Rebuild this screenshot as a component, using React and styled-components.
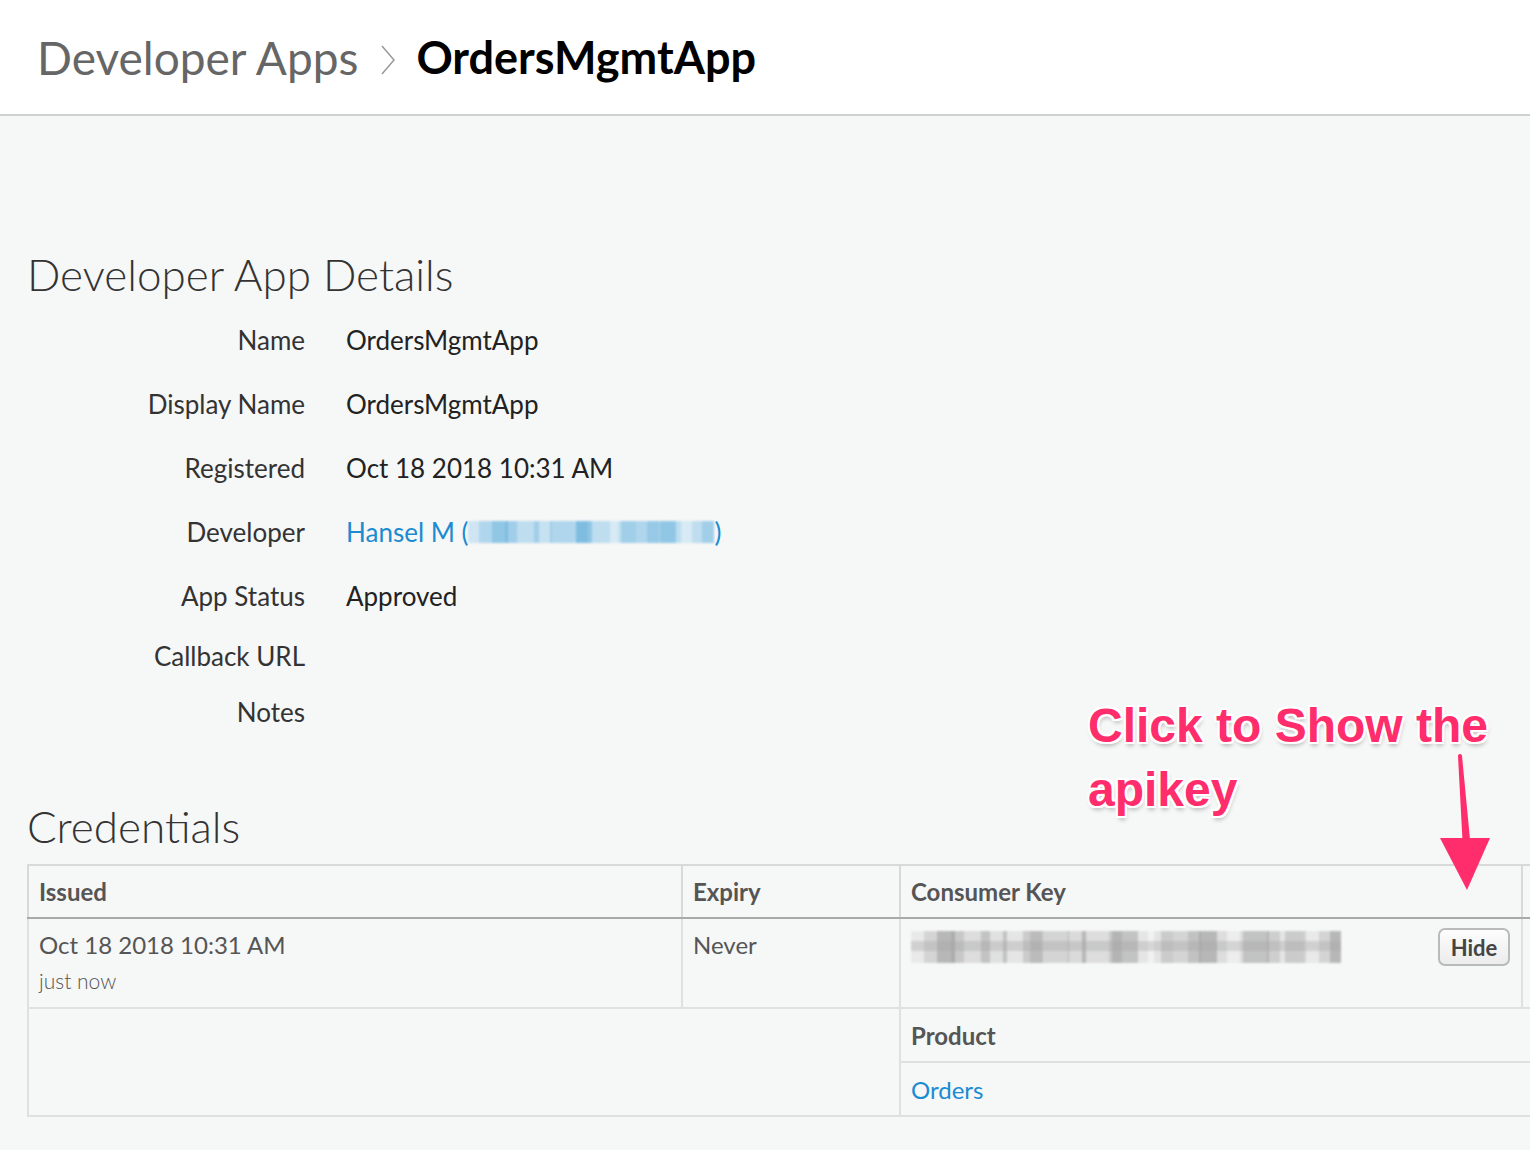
import React from 'react';
import styled, { createGlobalStyle } from 'styled-components';

const GlobalStyle = createGlobalStyle`
	html, body {
		margin: 0;
		padding: 0;
		background: #f6f7f7;
		font-family: Lato, 'Open Sans', sans-serif;
		overflow-x: hidden;
	}
`;

const Page = styled.div`
	position: relative;
	width: 1530px;
	min-height: 1150px;
	overflow: hidden;
`;

const Header = styled.header`
	display: flex;
	align-items: center;
	height: 114px;
	padding-left: 37px;
	background: #fff;
	border-bottom: 2px solid #cfd0d0;
`;

const Crumb = styled.span`
	font-size: ${(props) => (props.current ? '45px' : '46px')};
	font-weight: ${(props) => (props.current ? 700 : 400)};
	color: ${(props) => (props.current ? '#000' : '#666')};
`;

const Chevron = styled.svg`
	width: 16px;
	height: 32px;
	margin: 6px 20px 0 22px;
`;

const Main = styled.main`
	padding: 132px 0 0 27px;
`;

const SectionTitle = styled.h2`
	margin: 0 0 ${(props) => props.gap || '8px'};
	font-size: 44px;
	line-height: 52px;
	font-weight: 300;
	color: #333;
`;

const Details = styled.dl`
	display: grid;
	grid-template-columns: 278px 1fr;
	column-gap: 41px;
	align-items: center;
	margin: 0 0 60px;
`;

const Label = styled.dt`
	text-align: right;
	font-size: 26px;
	line-height: 56px;
	color: #333;
`;

const Value = styled.dd`
	margin: 0;
	font-size: 26px;
	line-height: 64px;
	color: #222;
`;

const Link = styled.a`
	color: #1b8bd2;
	text-decoration: none;
	display: inline-flex;
	align-items: center;
`;

const Redacted = styled.span`
	display: inline-block;
	width: ${(props) => props.w};
	height: ${(props) => props.h};
	background: ${(props) => props.bg};
	filter: blur(1.2px);
	opacity: ${(props) => props.o || 1};
`;

const Table = styled.table`
	width: 1794px;
	table-layout: fixed;
	border-collapse: collapse;
	font-size: 24px;
	color: #555;
`;

const Th = styled.th`
	height: 51px;
	padding: 0 10px;
	line-height: 28px;
	text-align: left;
	font-weight: 700;
	border: 2px solid #d8d9d9;
	border-bottom: 2px solid #a8a9a9;
`;

const Td = styled.td`
	vertical-align: top;
	padding: ${(props) => props.pad || '10px 10px 0'};
	height: ${(props) => props.h || 'auto'};
	border: 2px solid #dfe0e0;
`;

const Line = styled.div`
	line-height: 32px;
`;

const Sub = styled.div`
	font-size: 21px;
	font-weight: 300;
	line-height: 40px;
	color: #555;
`;

const KeyRow = styled.div`
	display: flex;
	justify-content: space-between;
	align-items: flex-start;
	padding-top: 2px;
`;

const HideButton = styled.button`
	width: 72px;
	height: 38px;
	margin: -3px 1px 0 0;
	font-family: Lato, sans-serif;
	font-size: 22px;
	font-weight: 700;
	color: #444;
	background: linear-gradient(#fdfdfd, #ececec);
	border: 2px solid #b9bbbb;
	border-radius: 7px;
`;

const Inner = styled.table`
	width: 100%;
	border-collapse: collapse;
`;

const InnerCell = styled.td`
	height: ${(props) => props.h};
	padding: 0 10px;
	font-weight: ${(props) => (props.head ? 700 : 400)};
	border-bottom: ${(props) => (props.head ? '2px solid #dfe0e0' : 'none')};
`;

const Callout = styled.div`
	position: absolute;
	left: 1088px;
	top: 694px;
	font-family: 'Liberation Sans', Arial, sans-serif;
	font-weight: 700;
	font-size: 48px;
	line-height: 64px;
	color: #ff2d6c;
	text-shadow: 2px 0 0 #fff, -2px 0 0 #fff, 0 2px 0 #fff, 0 -2px 0 #fff,
		2px 2px 0 #fff, -2px -2px 0 #fff, 2px -2px 0 #fff, -2px 2px 0 #fff,
		1px 4px 4px rgba(0, 0, 0, 0.25);
`;

const Arrow = styled.svg`
	position: absolute;
	left: 1436px;
	top: 752px;
	width: 60px;
	height: 142px;
`;

const keyBg = [
	'linear-gradient(180deg, transparent 0 10px, rgba(150,150,150,0.35) 10px 20px, transparent 20px)',
	'repeating-linear-gradient(90deg, rgba(255,255,255,0.5) 0 13px, transparent 13px 40px, rgba(120,120,120,0.25) 40px 53px, transparent 53px 79px)',
	'repeating-linear-gradient(90deg, #cfcfcf 0 26px, #adadad 26px 44px, #d9d9d9 44px 70px, #bababa 70px 96px, #e3e3e3 96px 112px, #c4c4c4 112px 131px)',
].join(', ');

const mailBg = [
	'repeating-linear-gradient(90deg, rgba(255,255,255,0.4) 0 11px, transparent 11px 37px, rgba(60,150,210,0.25) 37px 49px, transparent 49px 71px)',
	'repeating-linear-gradient(90deg, #a9d3ec 0 24px, #86c2e3 24px 40px, #b8dbef 40px 66px, #98cae7 66px 84px)',
].join(', ');

const App = () => {
	return (
		<Page>
			<GlobalStyle />
			<Header>
				<Crumb>Developer Apps</Crumb>
				<Chevron viewBox="0 0 16 32">
					<polyline points="2,2 14,16 2,30" fill="none" stroke="#999" strokeWidth="1.5" />
				</Chevron>
				<Crumb current>OrdersMgmtApp</Crumb>
			</Header>
			<Main>
				<SectionTitle>Developer App Details</SectionTitle>
				<Details>
					<Label>Name</Label>
					<Value>OrdersMgmtApp</Value>
					<Label>Display Name</Label>
					<Value>OrdersMgmtApp</Value>
					<Label>Registered</Label>
					<Value>Oct 18 2018 10:31 AM</Value>
					<Label>Developer</Label>
					<Value>
						<Link href="#">
							Hansel M (<Redacted w="246px" h="22px" bg={mailBg} o={0.9} />)
						</Link>
					</Value>
					<Label>App Status</Label>
					<Value>Approved</Value>
					<Label>Callback URL</Label>
					<Value />
					<Label>Notes</Label>
					<Value />
				</Details>
				<SectionTitle gap="12px">Credentials</SectionTitle>
				<Table>
					<colgroup>
						<col style={{ width: 654 }} />
						<col style={{ width: 218 }} />
						<col style={{ width: 622 }} />
						<col style={{ width: 300 }} />
					</colgroup>
					<thead>
						<tr>
							<Th>Issued</Th>
							<Th>Expiry</Th>
							<Th>Consumer Key</Th>
							<Th />
						</tr>
					</thead>
					<tbody>
						<tr>
							<Td h="78px">
								<Line>Oct 18 2018 10:31 AM</Line>
								<Sub>just now</Sub>
							</Td>
							<Td>
								<Line>Never</Line>
							</Td>
							<Td>
								<KeyRow>
									<Redacted w="430px" h="32px" bg={keyBg} o={0.85} />
									<HideButton>Hide</HideButton>
								</KeyRow>
							</Td>
							<Td />
						</tr>
						<tr>
							<Td colSpan={2} />
							<Td colSpan={2} pad="0">
								<Inner>
									<tbody>
										<tr>
											<InnerCell head h="52px">Product</InnerCell>
										</tr>
										<tr>
											<InnerCell h="52px">
												<Link href="#">Orders</Link>
											</InnerCell>
										</tr>
									</tbody>
								</Inner>
							</Td>
						</tr>
					</tbody>
				</Table>
			</Main>
			<Callout>
				Click to Show the
				<br />
				apikey
			</Callout>
			<Arrow viewBox="0 0 60 142">
				<path d="M24 4 L29 98 L33 98 Z" stroke="#ff2d6c" strokeWidth="4" strokeLinejoin="round" fill="#ff2d6c" />
				<path d="M4 86 L54 86 L31 138 Z" fill="#ff2d6c" />
			</Arrow>
		</Page>
	);
};

export default App;
